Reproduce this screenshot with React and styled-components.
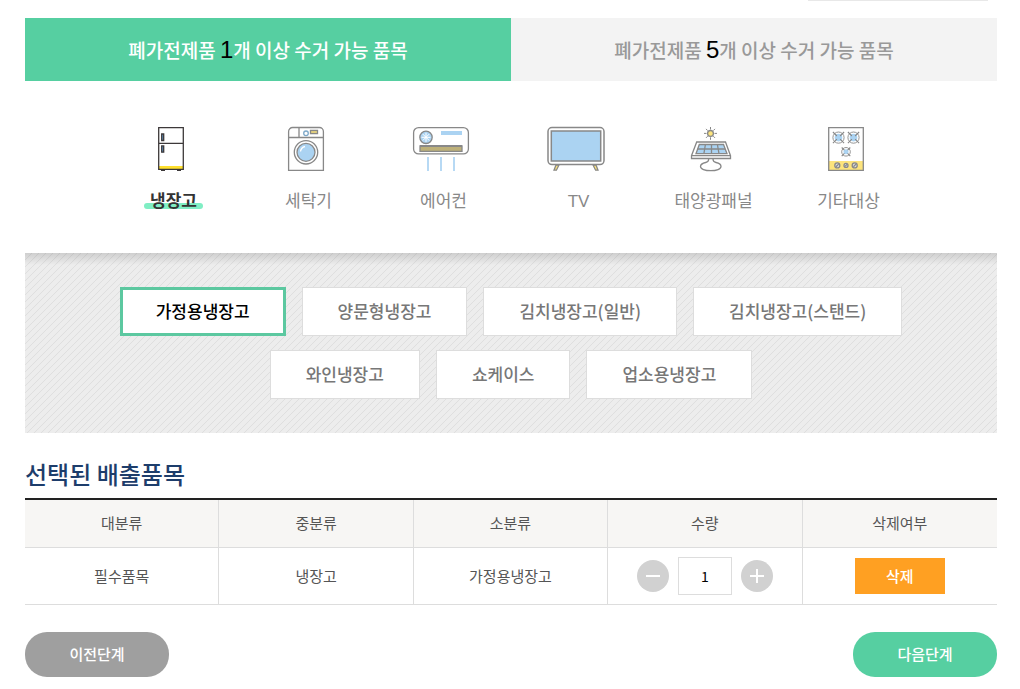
import React, { useState } from "react";
import styled, { createGlobalStyle } from "styled-components";

const GlobalStyle = createGlobalStyle`
  * { box-sizing: border-box; }
  body {
    margin: 0;
    background: #fff;
    color: #555;
    font-family: "Noto Sans CJK KR", sans-serif;
    font-size: 15px;
  }
  button, input { font-family: inherit; margin: 0; }
  button { cursor: pointer; }
`;

const Page = styled.main`
  padding: 0 23px 12px 25px;
`;

const PanelEdge = styled.div`
  width: 180px;
  height: 1px;
  margin: 0 9px 17px auto;
  background: #e8e8e8;
  box-shadow: 0 4px 8px rgba(0, 0, 0, 0.02);
`;

const Tabs = styled.div`
  display: grid;
  grid-template-columns: 1fr 1fr;
`;

const Tab = styled.button`
  height: 63px;
  padding: 0;
  border: 0;
  background: ${(p) => (p.$active ? "#56cfa1" : "#f3f3f3")};
  color: ${(p) => (p.$active ? "#fff" : "#999")};
  font-size: 19px;
  font-weight: 500;
  line-height: 24px;
`;

const TabCount = styled.span`
  color: #000;
  font-family: "Liberation Sans", sans-serif;
  font-size: 24px;
  font-weight: 400;
`;

const Categories = styled.div`
  display: flex;
  justify-content: center;
  padding: 44px 0 39px;
`;

const Category = styled.button`
  display: flex;
  flex-direction: column;
  align-items: center;
  gap: 17px;
  width: 135px;
  padding: 0;
  border: 0;
  background: none;
  color: ${(p) => (p.$active ? "#333" : "#888")};
  font-family: "Liberation Sans", "Noto Sans CJK KR", sans-serif;
  font-size: 17px;
  font-weight: ${(p) => (p.$active ? 700 : 400)};
  line-height: 24px;
`;

const CategoryIcon = styled.svg`
  width: 64px;
  height: 48px;
  margin-right: 6px;
  fill: none;
  stroke: #888;
  stroke-width: 1.3;
`;

const CategoryLabel = styled.span`
  position: relative;
  z-index: 0;

  &::before {
    content: "";
    display: ${(p) => (p.$active ? "block" : "none")};
    position: absolute;
    z-index: -1;
    left: -6px;
    right: -6px;
    bottom: 5px;
    height: 6px;
    border-radius: 3px;
    background: #80eec4;
  }
`;

const Options = styled.div`
  display: flex;
  flex-wrap: wrap;
  justify-content: center;
  gap: 14px 16px;
  padding: 34px 80px;
  background:
    linear-gradient(rgba(0, 0, 0, 0.13), rgba(0, 0, 0, 0) 12px),
    linear-gradient(135deg, #ededed 42%, #dfdfdf 50%, #ededed 58%) 0 0 / 7px 7px;
`;

const Option = styled.button`
  height: 49px;
  padding: ${(p) => (p.$active ? "0 33px 2px" : "0 35px 2px")};
  border: ${(p) => (p.$active ? "3px solid #5cc8a0" : "1px solid #ddd")};
  background: #fff;
  color: ${(p) => (p.$active ? "#000" : "#777")};
  font-size: 17px;
  font-weight: 500;
`;

const Title = styled.h2`
  margin: 24px 0 8px;
  color: #1d3d6b;
  font-size: 24px;
  font-weight: 500;
  line-height: 33px;
`;

const ItemTable = styled.table`
  width: 100%;
  table-layout: fixed;
  border-collapse: separate;
  border-spacing: 0;
  border-top: 2px solid #222;
  text-align: center;

  th, td {
    padding: 0;
    border-bottom: 1px solid #ddd;
    border-right: 1px solid #ddd;
    font-weight: 400;
  }
  th { height: 48px; padding-bottom: 2px; background: #f7f6f4; }
  td { height: 57px; }
  th:last-child, td:last-child { border-right: 0; }
`;

const TextCell = styled.td`
  && { padding-bottom: 2px; }
`;

const Quantity = styled.div`
  display: flex;
  align-items: center;
  justify-content: center;
  gap: 9px;
`;

const RoundButton = styled.button`
  display: flex;
  align-items: center;
  justify-content: center;
  width: 32px;
  height: 32px;
  padding: 0;
  border: 0;
  border-radius: 50%;
  background: #d1d1d1;
  color: #fff;
`;

const QuantityInput = styled.input`
  width: 54px;
  height: 38px;
  padding: 0;
  border: 1px solid #ddd;
  color: #000;
  font-size: 14px;
  text-align: center;
`;

const DeleteButton = styled.button`
  width: 90px;
  height: 36px;
  padding: 0 0 2px;
  border: 0;
  background: #ffa022;
  color: #fff;
  font-size: 15px;
  font-weight: 500;
  vertical-align: middle;
`;

const Steps = styled.div`
  display: flex;
  justify-content: space-between;
  margin-top: 27px;
`;

const StepButton = styled.button`
  width: 144px;
  height: 45px;
  padding: 0 0 2px;
  border: 0;
  border-radius: 22px;
  background: ${(p) => (p.$next ? "#56cfa1" : "#9f9f9f")};
  color: #fff;
  font-size: 15px;
  font-weight: 500;
`;

const BLUE = "#abd3f2";
const YELLOW = "#fde47c";

const Fridge = () => (
  <g stroke="#3d393a">
    <path d="M20 41h24v3H20z" fill="#ffe02e" stroke="none" />
    <path d="M19.7 2.7h24.6v41.6H19.7zM19.7 18.4h24.6" />
    <path d="M22.7 9h2v6.5h-2zM22.7 20.9h2v6.3h-2z" fill="#5c94c4" />
    <path d="M22 45.3h4M38 45.3h4" />
  </g>
);

const Washer = () => (
  <g>
    <path d="M14.6 45.3V6.5a4 4 0 0 1 4-4h26.8a4 4 0 0 1 4 4v38.8zM14.6 12.5h34.8M25 2.5v10" />
    <path d="M36.5 5.5h7v3h-7z" fill={YELLOW} />
    <circle cx="32" cy="8.3" r="2.3" stroke="#7fa9c9" />
    <circle cx="32" cy="27.3" r="11.7" />
    <circle cx="32" cy="27.3" r="9" fill={BLUE} />
    <path d="M26.5 26.5a6 6 0 0 1 4.5-5" stroke="#fff" />
  </g>
);

const AirConditioner = () => (
  <g>
    <rect x="4.6" y="2.6" width="54.8" height="26.3" rx="5" />
    <circle cx="17" cy="12.3" r="6.2" fill={BLUE} />
    <path d="M17 7.8v9M12.5 12.3h9M13.8 9.1l6.4 6.4M20.2 9.1l-6.4 6.4" stroke="#fff" strokeWidth="1" />
    <path d="M32 8h21" stroke={BLUE} strokeWidth="4" />
    <path d="M11 21h42v5.3H11z" fill="#bdb079" />
    <path d="M11 21h42" strokeWidth="1.8" />
    <path d="M19 32v14M32 32v14M45 32v14" stroke={BLUE} strokeWidth="1.7" />
  </g>
);

const Television = () => (
  <g>
    <path d="M12 40l-2 5.2h2.4L15 40zM52 40l2 5.2h-2.4L49 40z" fill={YELLOW} />
    <rect x="4" y="2.6" width="56" height="37" rx="4" fill="#fff" strokeWidth="1.5" />
    <path d="M7.3 6h49.4v30H7.3z" fill={BLUE} strokeWidth="1.5" />
  </g>
);

const SolarPanel = () => (
  <g>
    <circle cx="31.5" cy="8.4" r="2.9" fill={YELLOW} />
    <path d="M31.5 2v2.5M31.5 12.3v2.5M25 8.4h2.5M35.5 8.4H38M27 3.9l1.7 1.7M34.3 11.2l1.7 1.7M36 3.9l-1.7 1.7M28.7 11.2L27 12.9" strokeWidth="1" />
    <path d="M17.7 17h28.8l5 13.7V33.5H12.5v-2.8zM12.5 30.7h39" />
    <path d="M20.3 19.5h24.2l3.5 9.2H17z" fill={BLUE} />
    <path d="M18.7 24h27.5M26.4 19.5l-1.5 9.2M32.5 19.5v9.2M38.4 19.5l1.6 9.2" />
    <path d="M29.7 34c0 2-.7 3-3 3.500-3 .7-5.200 2-5.200 4 0 2.500 4.500 4.200 10.300 4.200S42 44 42 41.500c0-2-2-3.300-5-4-2.400-.5-3-1.500-3-3.500" />
  </g>
);

const Burner = ({ x, y, r }) => (
  <g transform={`translate(${x} ${y})`}>
    <circle r={r} strokeWidth="0.9" />
    <circle r={r - 1.8} fill={BLUE} stroke="none" />
    <path d={`M${-r} ${-r}L-1.6-1.6M${r} ${-r}L1.6-1.6M${-r} ${r}L-1.6 1.6M${r} ${r}L1.6 1.6`} strokeWidth="1.1" />
  </g>
);

const Stove = () => (
  <g>
    <path d="M15 36h34v9H15z" fill={YELLOW} stroke="none" />
    <path d="M14.7 2.7h34.6v42.6H14.7z" />
    <Burner x={24.5} y={12.6} r={5.6} />
    <Burner x={39.5} y={12.6} r={5.6} />
    <Burner x={32} y={26.8} r={4.3} />
    <g fill="#ddd">
      <circle cx="23.3" cy="40.4" r="2.5" />
      <circle cx="32" cy="40.4" r="2" />
      <circle cx="40.7" cy="40.4" r="2.5" />
    </g>
    <path d="M22 41.7l2.6-2.6M31 41.4l2-2M39.4 41.7l2.6-2.6" />
  </g>
);

const tabs = [1, 5];

const categories = [
  { name: "냉장고", Icon: Fridge },
  { name: "세탁기", Icon: Washer },
  { name: "에어컨", Icon: AirConditioner },
  { name: "TV", Icon: Television },
  { name: "태양광패널", Icon: SolarPanel },
  { name: "기타대상", Icon: Stove },
];

const options = [
  "가정용냉장고",
  "양문형냉장고",
  "김치냉장고(일반)",
  "김치냉장고(스탠드)",
  "와인냉장고",
  "쇼케이스",
  "업소용냉장고",
];

const columns = ["대분류", "중분류", "소분류", "수량", "삭제여부"];

export default function App() {
  const [tab, setTab] = useState(1);
  const [category, setCategory] = useState("냉장고");
  const [option, setOption] = useState("가정용냉장고");
  const [count, setCount] = useState(1);

  return (
    <>
      <GlobalStyle />
      <Page>
        <PanelEdge />
        <Tabs>
          {tabs.map((n) => (
            <Tab key={n} type="button" $active={tab === n} onClick={() => setTab(n)}>
              폐가전제품 <TabCount>{n}</TabCount>개 이상 수거 가능 품목
            </Tab>
          ))}
        </Tabs>
        <Categories>
          {categories.map(({ name, Icon }) => (
            <Category key={name} type="button" $active={category === name} onClick={() => setCategory(name)}>
              <CategoryIcon viewBox="0 0 64 48" aria-hidden="true">
                <Icon />
              </CategoryIcon>
              <CategoryLabel $active={category === name}>{name}</CategoryLabel>
            </Category>
          ))}
        </Categories>
        <Options>
          {options.map((name) => (
            <Option key={name} type="button" $active={option === name} onClick={() => setOption(name)}>
              {name}
            </Option>
          ))}
        </Options>
        <Title>선택된 배출품목</Title>
        <ItemTable>
          <thead>
            <tr>
              {columns.map((name) => (
                <th key={name} scope="col">{name}</th>
              ))}
            </tr>
          </thead>
          <tbody>
            <tr>
              <TextCell>필수품목</TextCell>
              <TextCell>냉장고</TextCell>
              <TextCell>가정용냉장고</TextCell>
              <td>
                <Quantity>
                  <RoundButton type="button" aria-label="수량 감소" onClick={() => setCount(Math.max(1, count - 1))}>
                    <svg width="14" height="14" stroke="currentColor" strokeWidth="2" aria-hidden="true">
                      <path d="M0 7h14" />
                    </svg>
                  </RoundButton>
                  <QuantityInput
                    aria-label="수량"
                    value={count}
                    onChange={(e) => setCount(Number(e.target.value) || 1)}
                  />
                  <RoundButton type="button" aria-label="수량 증가" onClick={() => setCount(count + 1)}>
                    <svg width="14" height="14" stroke="currentColor" strokeWidth="2" aria-hidden="true">
                      <path d="M0 7h14M7 0v14" />
                    </svg>
                  </RoundButton>
                </Quantity>
              </td>
              <td>
                <DeleteButton type="button">삭제</DeleteButton>
              </td>
            </tr>
          </tbody>
        </ItemTable>
        <Steps>
          <StepButton type="button">이전단계</StepButton>
          <StepButton type="button" $next>다음단계</StepButton>
        </Steps>
      </Page>
    </>
  );
}
